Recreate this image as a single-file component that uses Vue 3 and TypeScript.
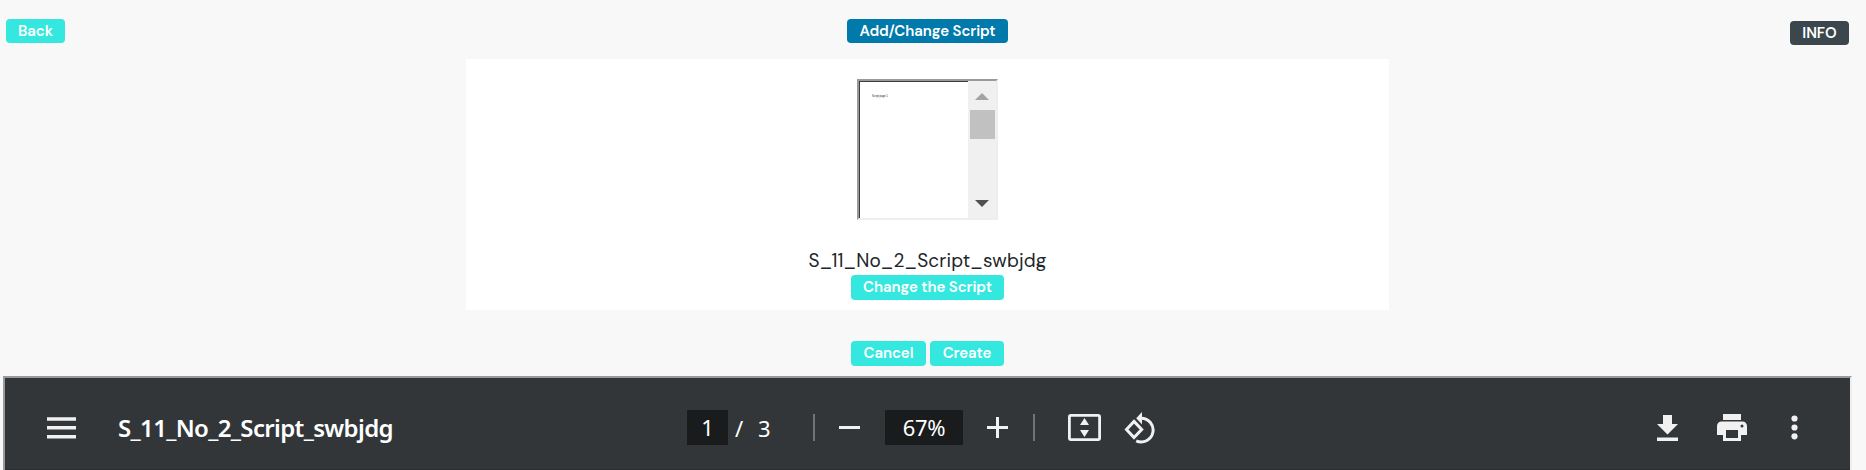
<script setup lang="ts">
import { ref } from 'vue'

const fileName = ref<string>('S_11_No_2_Script_swbjdg')
const page = ref<number>(1)
const pageCount = ref<number>(3)
const zoom = ref<string>('67%')
</script>

<template>
  <main class="page">
    <header class="top">
      <button class="btn back"><span>Back</span></button>
      <button class="btn primary"><span>Add/Change Script</span></button>
      <button class="btn info"><span>INFO</span></button>
    </header>

    <section class="card">
      <div class="preview">
        <div class="sheet"><span>Script page 1</span></div>
        <div class="scroll">
          <svg class="arrow" width="14" height="7" viewBox="0 0 14 7"><path d="M0 7 7 0l7 7z" fill="#a3a3a3" /></svg>
          <div class="thumb"></div>
          <svg class="arrow down" width="14" height="7" viewBox="0 0 14 7"><path d="M0 0h14L7 7z" fill="#505050" /></svg>
        </div>
      </div>
      <p class="name"><span>{{ fileName }}</span></p>
      <button class="btn change"><span>Change the Script</span></button>
    </section>

    <div class="actions">
      <button class="btn cancel"><span>Cancel</span></button>
      <button class="btn create"><span>Create</span></button>
    </div>

    <section class="viewer">
      <div class="side left">
        <svg width="29" height="22" viewBox="0 0 29 22" fill="#f1f1f1"><path d="M0 .2h29v3.5H0zM0 9.1h29v3.5H0zM0 18.1h29v3.5H0z" /></svg>
        <span class="title">{{ fileName }}</span>
      </div>
      <div class="middle">
        <span class="field num">{{ page }}</span>
        <span class="slash">/</span>
        <span class="count">{{ pageCount }}</span>
        <i class="sep first"></i>
        <svg class="minus" width="21" height="21" viewBox="0 0 21 21"><path d="M0 9h21v3H0z" fill="#f1f1f1" /></svg>
        <span class="field zoom">{{ zoom }}</span>
        <svg class="plus" width="21" height="21" viewBox="0 0 21 21"><path d="M0 9h9V0h3v9h9v3h-9v9H9v-9H0z" fill="#f1f1f1" /></svg>
        <i class="sep second"></i>
        <svg class="fit" width="33" height="27" viewBox="0 0 33 27">
          <rect x="1.4" y="1.4" width="30.2" height="24.2" rx="1.5" fill="none" stroke="#f1f1f1" stroke-width="2.8" />
          <path d="M12 11h9l-4.500-7zM12 16h9l-4.500 7z" fill="#f1f1f1" />
        </svg>
        <svg class="rotate" width="32" height="32" viewBox="0 0 32 32" fill="none" stroke="#f1f1f1" stroke-width="3">
          <path d="m10 9.4 7.7 8.1-7.7 8.1-7.5-8.1z" />
          <path d="M17 6.2a11.9 11.9 0 1 1-4.800 22.700" />
          <path d="M12.200 6.200 18 0v12.400z" fill="#f1f1f1" stroke="none" />
        </svg>
      </div>
      <div class="side right">
        <svg class="download" width="21" height="26" viewBox="0 0 21 26" fill="#f1f1f1"><path d="M6 0h9v9h6L10.500 19.500 0 9h6zM0 22.500h21V26H0z" /></svg>
        <svg class="print" width="30" height="27" viewBox="0 0 30 27" fill="#f1f1f1">
          <path d="M6 0h18v6H6z" />
          <path fill-rule="evenodd" d="M4.500 7.500h21A4.500 4.500 0 0 1 30 12v9h-6v6H6v-6H0v-9a4.500 4.500 0 0 1 4.500-4.500zM9 16v8h12v-8zM25 10.500a1.500 1.500 0 1 0 0 3 1.500 1.500 0 0 0 0-3z" />
        </svg>
        <svg class="more" width="7" height="25" viewBox="0 0 7 25" fill="#f1f1f1"><circle cx="3.500" cy="3.500" r="3.100" /><circle cx="3.500" cy="12.500" r="3.100" /><circle cx="3.500" cy="21.300" r="3.100" /></svg>
      </div>
    </section>
  </main>
</template>

<style>
body {
  margin: 0;
  overflow: hidden;
  background: #f8f8f8;
}
</style>

<style scoped>
.page {
  box-sizing: border-box;
  height: 470px;
  display: flex;
  flex-direction: column;
  overflow: hidden;
  background: #f8f8f8;
  font-family: "DM Sans", Lato, "Open Sans", sans-serif;
}
.top {
  display: grid;
  grid-template-columns: 841px 161px 1fr;
  padding: 19px 17px 0 6px;
  height: 59px;
  flex-shrink: 0;
  box-sizing: border-box;
  align-items: start;
}
.btn {
  display: flex;
  justify-content: center;
  align-items: center;
  box-sizing: border-box;
  height: 24px;
  padding: 0;
  border: 0;
  border-radius: 4px;
  background: #34e8e0;
  color: #fff;
  font: 600 15px "DM Sans", Lato, sans-serif;
  letter-spacing: -0.08px;
  white-space: nowrap;
}
.back { width: 59px; }
.primary { width: 161px; background: #0079ab; }
.info {
  width: 59px;
  margin-top: 2px;
  justify-self: end;
  background: #3b464d;
}
.card {
  box-sizing: border-box;
  width: 923px;
  height: 251px;
  margin-left: 466px;
  padding-top: 20px;
  display: flex;
  flex-direction: column;
  align-items: center;
  flex-shrink: 0;
  background: #fff;
}
.preview {
  box-sizing: border-box;
  width: 141px;
  height: 141px;
  display: flex;
  flex-shrink: 0;
  border: 2px solid;
  border-color: #9a9a9a #eee #eee #9a9a9a;
}
.sheet {
  box-sizing: border-box;
  width: 109px;
  border: solid #3c3c3c;
  border-width: 1px 0 0 1px;
  padding: 13px 0 0 12px;
  font: 2.700px/4px "Liberation Sans", sans-serif;
  color: #222;
}
.sheet span { display: block; white-space: nowrap; }
.scroll {
  width: 28px;
  background: #f0f0f0;
  display: flex;
  flex-direction: column;
  align-items: center;
  padding: 12px 0 11px;
  box-sizing: border-box;
}
.thumb { width: 25px; height: 29px; margin-top: 10px; background: #c1c1c1; }
.down { margin-top: auto; }
.name {
  margin: 27px 0 0;
  height: 28px;
  line-height: 28px;
  font-size: 19px;
  letter-spacing: 0.12px;
  color: #212529;
}
.change { width: 153px; height: 25px; padding-bottom: 1px; }
.actions {
  display: flex;
  gap: 4px;
  height: 66px;
  padding: 31px 0 0 851px;
  box-sizing: border-box;
  flex-shrink: 0;
}
.actions .btn { height: 25px; padding-bottom: 1px; }
.cancel { width: 75px; }
.create { width: 74px; }
.viewer {
  box-sizing: border-box;
  width: 1849px;
  height: 110px;
  flex-shrink: 0;
  margin-left: 3px;
  border: 2px solid;
  border-color: #9a9a9a #eee #eee #9a9a9a;
  background: linear-gradient(#323639 91px, #2b2e31 91px);
  display: grid;
  grid-template-columns: 682px 1fr 200px;
  color: #fff;
  font-family: "Segoe UI", "Noto Sans", sans-serif;
}
.side, .middle { display: flex; height: 99px; align-items: center; }
.left { padding-left: 42px; gap: 42px; }
.title { font-size: 24px; font-weight: 600; line-height: 30px; letter-spacing: -0.65px; white-space: nowrap; }
.middle { font-size: 22px; }
.field {
  height: 35px;
  line-height: 35px;
  text-align: center;
  background: #191b1c;
}
.num { width: 41px; }
.slash { margin-left: 7px; width: 10px; }
.count { margin-left: 13px; width: 13px; }
.sep { width: 2px; height: 27px; background: #707375; }
.first { margin-left: 42px; }
.minus { margin-left: 24px; }
.zoom { width: 78px; margin-left: 25px; letter-spacing: -0.3px; }
.plus { margin-left: 24px; }
.second { margin-left: 25px; }
.fit { margin-left: 33px; }
.rotate { margin-left: 23px; }
.right { justify-content: flex-end; padding-right: 52px; box-sizing: border-box; }
.print { margin-left: 39px; }
.more { margin-left: 44px; }
</style>
